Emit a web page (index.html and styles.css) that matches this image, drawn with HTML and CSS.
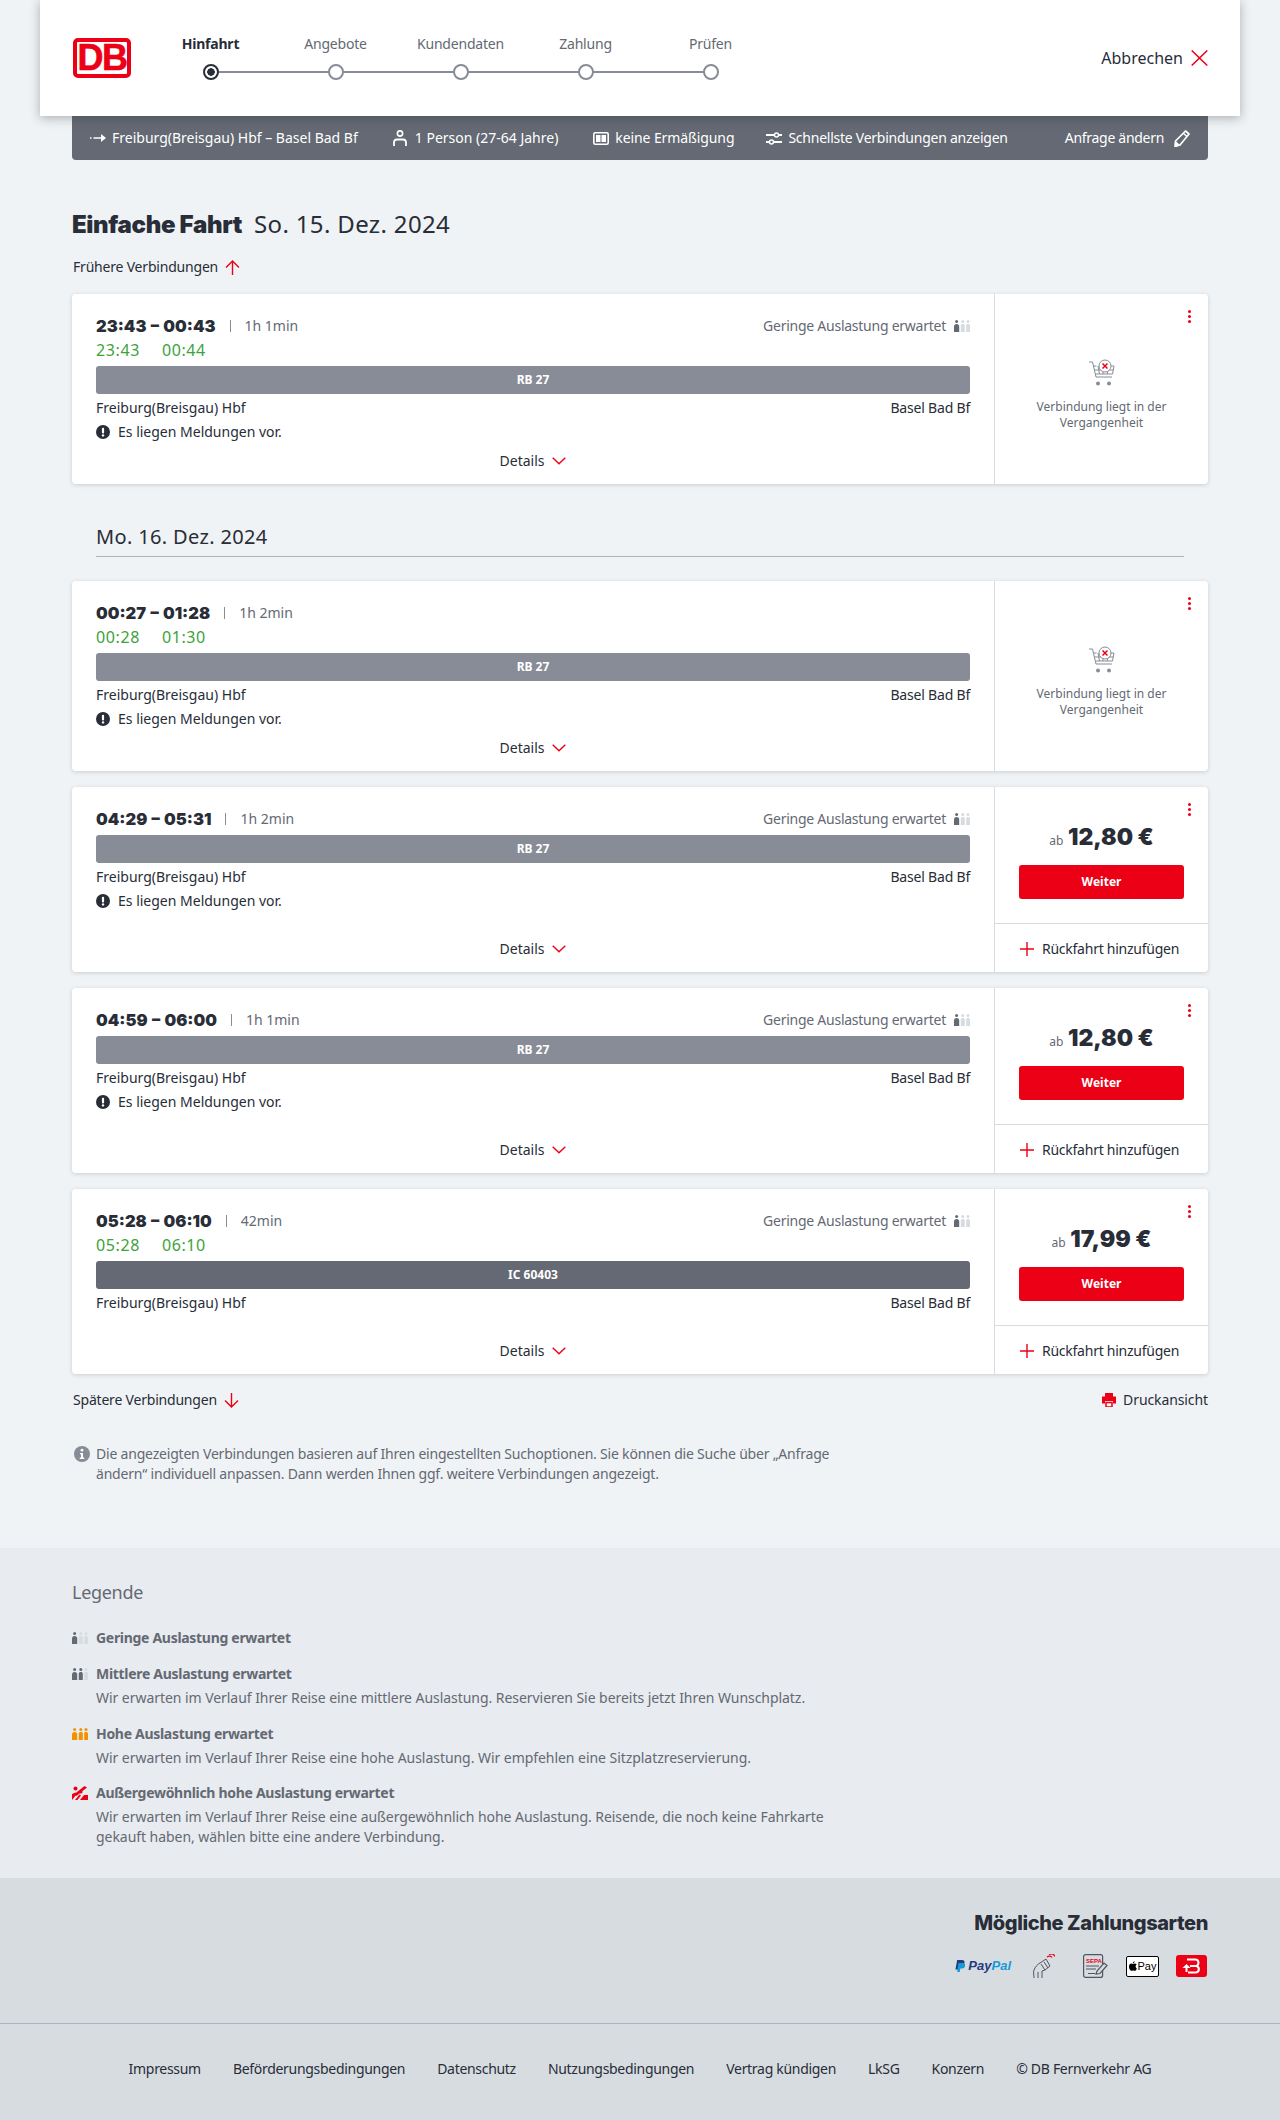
FILE: index.html
```html
<!DOCTYPE html>
<html lang="de">
<head>
<meta charset="utf-8">
<title>Angebote</title>
<link rel="stylesheet" href="styles.css">
</head>
<body>
<svg class="defs" width="0" height="0" aria-hidden="true">
  <symbol id="occ" viewBox="0 0 16 12">
    <circle cx="2.600" cy="1.500" r="1.500" fill="#646973"/><path d="M0 12V6.500C0 5 1 4 2.600 4S5.200 5 5.200 6.500V12z" fill="#646973"/>
    <circle cx="8.800" cy="1.500" r="1.500" fill="#d7dce1"/><path d="M6.800 12V5.500C6.800 4.600 7.600 4 8.800 4s2 .6 2 1.500V12z" fill="#d7dce1"/>
    <circle cx="14" cy="1.500" r="1.500" fill="#d7dce1"/><path d="M12.200 12V5.500C12.200 4.600 13 4 14 4s2 .6 2 1.500V12z" fill="#d7dce1"/>
  </symbol>
  <symbol id="occ2" viewBox="0 0 16 12">
    <circle cx="2.600" cy="1.500" r="1.500" fill="#646973"/><path d="M0 12V6.500C0 5 1 4 2.600 4S5.200 5 5.200 6.500V12z" fill="#646973"/>
    <circle cx="8.800" cy="1.500" r="1.500" fill="#646973"/><path d="M6.800 12V5.500C6.800 4.600 7.600 4 8.800 4s2 .6 2 1.500V12z" fill="#646973"/>
    <circle cx="14" cy="1.500" r="1.500" fill="#d7dce1"/><path d="M12.200 12V5.500C12.200 4.600 13 4 14 4s2 .6 2 1.500V12z" fill="#d7dce1"/>
  </symbol>
  <symbol id="occ3" viewBox="0 0 16 12">
    <circle cx="2.600" cy="1.500" r="1.500" fill="#f39200"/><path d="M0 12V6.500C0 5 1 4 2.600 4S5.200 5 5.200 6.500V12z" fill="#f39200"/>
    <circle cx="8.800" cy="1.500" r="1.500" fill="#f39200"/><path d="M6.800 12V5.500C6.800 4.600 7.600 4 8.800 4s2 .6 2 1.500V12z" fill="#f39200"/>
    <circle cx="14" cy="1.500" r="1.500" fill="#f39200"/><path d="M12.200 12V5.500C12.200 4.600 13 4 14 4s2 .6 2 1.500V12z" fill="#f39200"/>
  </symbol>
  <symbol id="occ4" viewBox="0 0 16 14">
    <path d="M0 14V8l3.500-1.500L5 8l-5 6zM8 14l4-5 4 0v5zM3 14l4.500-5.500L9 9.500 5.500 14zM12.500 0 15 1.500 4.500 10 2.500 8z" fill="#ec0016"/>
    <circle cx="3.500" cy="2.500" r="2" fill="#ec0016"/><circle cx="9" cy="6" r="1.500" fill="#ec0016"/>
  </symbol>
  <symbol id="alert" viewBox="0 0 14 14">
    <circle cx="7" cy="7" r="7" fill="#282d37"/><rect x="5.900" y="2.800" width="2.200" height="5.600" rx="1" fill="#fff"/><circle cx="7" cy="10.400" r="1.200" fill="#fff"/>
  </symbol>
  <symbol id="chev" viewBox="0 0 14 8">
    <path d="M.7.700 7 6.800 13.300.700" fill="none" stroke="#ec0016" stroke-width="1.400"/>
  </symbol>
  <symbol id="plus" viewBox="0 0 14 14">
    <path d="M7 0v14M0 7h14" stroke="#ec0016" stroke-width="1.400" fill="none"/>
  </symbol>
  <symbol id="cart" viewBox="0 0 26 27">
    <g fill="none" stroke="#878c96" stroke-width="1">
      <path d="M0 3h3.500l3.500 15h16M4.500 7h3M5.500 11h19M6.500 15h17l1.500-8h-4"/>
      <path d="M9 7l1.500 8M14 11v4M19 11l-.7 4"/>
      <circle cx="16" cy="7" r="6" fill="#fff"/>
    </g>
    <circle cx="9" cy="24.500" r="2" fill="#878c96"/><circle cx="20" cy="24.500" r="2" fill="#878c96"/>
    <path d="M13.500 4.500l5 5M18.500 4.500l-5 5" stroke="#ec0016" stroke-width="1.500" fill="none"/>
  </symbol>
</svg>

<header class="site-header">
  <div class="logo">DB</div>
  <ol class="steps">
    <li class="step step-active"><span class="step-label">Hinfahrt</span><span class="step-dot"></span></li>
    <li class="step"><span class="step-label">Angebote</span><span class="step-dot"></span></li>
    <li class="step"><span class="step-label">Kundendaten</span><span class="step-dot"></span></li>
    <li class="step"><span class="step-label">Zahlung</span><span class="step-dot"></span></li>
    <li class="step"><span class="step-label">Prüfen</span><span class="step-dot"></span></li>
  </ol>
  <a class="cancel">Abbrechen
    <svg class="cancel-x" viewBox="0 0 17 16"><path d="M.7.500 16.300 15.500M16.300.500.700 15.500" stroke="#ec0016" stroke-width="1.500" fill="none"/></svg>
  </a>
</header>

<div class="summary">
  <span class="sum-item sum-route">
    <svg class="ico-arrow" viewBox="0 0 16 10"><path d="M0 5h1.500M3.500 5H12" stroke="#fff" stroke-width="1.500"/><path d="M11 1l5 4-5 4z" fill="#fff"/></svg>
    Freiburg(Breisgau) Hbf – Basel Bad Bf</span>
  <span class="sum-item sum-person">
    <svg class="ico-person" viewBox="0 0 14 16"><circle cx="7" cy="3.500" r="2.600" fill="none" stroke="#fff" stroke-width="1.600"/><path d="M1 16v-3.500C1 10.500 2.500 9.500 4 9.500h6c1.500 0 3 1 3 3V16" fill="none" stroke="#fff" stroke-width="1.800"/></svg>
    1 Person (27-64 Jahre)</span>
  <span class="sum-item sum-card">
    <svg class="ico-card" viewBox="0 0 16 13"><rect x=".8" y=".8" width="14.400" height="11.400" rx="1.500" fill="none" stroke="#fff" stroke-width="1.600"/><rect x="3" y="3" width="4.500" height="7" fill="#fff"/><rect x="8.500" y="3" width="4.500" height="7" fill="#fff"/></svg>
    keine Ermäßigung</span>
  <span class="sum-item sum-filter">
    <svg class="ico-filter" viewBox="0 0 16 13"><path d="M0 3h8M13 3h3M0 10h3M8 10h8" stroke="#fff" stroke-width="1.800" fill="none"/><circle cx="10.500" cy="3" r="2" fill="#646973" stroke="#fff" stroke-width="1.500"/><circle cx="5.500" cy="10" r="2" fill="#646973" stroke="#fff" stroke-width="1.500"/></svg>
    Schnellste Verbindungen anzeigen</span>
  <span class="sum-item sum-edit">Anfrage ändern
    <svg class="ico-pen" viewBox="0 0 16 17"><path d="M11.500 1 15 4 6 15l-5 1.500L1.500 11z" fill="none" stroke="#fff" stroke-width="1.700" stroke-linejoin="round"/><path d="M1.500 11 6 15l-5 1.500z" fill="#fff"/><path d="M9.500 3.500 13 6.500" stroke="#fff" stroke-width="1.500"/></svg>
  </span>
</div>

<main class="main">
  <h1 class="page-title"><strong>Einfache Fahrt</strong><span class="page-date">So. 15. Dez. 2024</span></h1>
  <a class="more more-up">Frühere Verbindungen
    <svg class="ico-updown" viewBox="0 0 15 15"><path d="M7.500 15V1M1 7.500 7.500 1 14 7.500" stroke="#ec0016" stroke-width="1.400" fill="none"/></svg>
  </a>

  <article class="card">
    <div class="conn">
      <div class="conn-head">
        <span class="time">23:43 – 00:43</span><span class="sep"></span><span class="dur">1h 1min</span>
        <span class="load">Geringe Auslastung erwartet<svg class="occ"><use href="#occ"/></svg></span>
      </div>
      <div class="rt"><span>23:43</span><span>00:44</span></div>
      <div class="train">RB 27</div>
      <div class="stations"><span>Freiburg(Breisgau) Hbf</span><span>Basel Bad Bf</span></div>
      <div class="notice"><svg class="ico-alert"><use href="#alert"/></svg>Es liegen Meldungen vor.</div>
      <div class="details">Details<svg class="ico-chev"><use href="#chev"/></svg></div>
    </div>
    <aside class="side side-past">
      <span class="dots"></span>
      <svg class="ico-cart"><use href="#cart"/></svg>
      <p class="past-text">Verbindung liegt in der Vergangenheit</p>
    </aside>
  </article>

  <h2 class="day">Mo. 16. Dez. 2024</h2>

  <article class="card">
    <div class="conn">
      <div class="conn-head">
        <span class="time">00:27 – 01:28</span><span class="sep"></span><span class="dur">1h 2min</span>
      </div>
      <div class="rt"><span>00:28</span><span>01:30</span></div>
      <div class="train">RB 27</div>
      <div class="stations"><span>Freiburg(Breisgau) Hbf</span><span>Basel Bad Bf</span></div>
      <div class="notice"><svg class="ico-alert"><use href="#alert"/></svg>Es liegen Meldungen vor.</div>
      <div class="details">Details<svg class="ico-chev"><use href="#chev"/></svg></div>
    </div>
    <aside class="side side-past">
      <span class="dots"></span>
      <svg class="ico-cart"><use href="#cart"/></svg>
      <p class="past-text">Verbindung liegt in der Vergangenheit</p>
    </aside>
  </article>

  <article class="card">
    <div class="conn">
      <div class="conn-head">
        <span class="time">04:29 – 05:31</span><span class="sep"></span><span class="dur">1h 2min</span>
        <span class="load">Geringe Auslastung erwartet<svg class="occ"><use href="#occ"/></svg></span>
      </div>
      <div class="train">RB 27</div>
      <div class="stations"><span>Freiburg(Breisgau) Hbf</span><span>Basel Bad Bf</span></div>
      <div class="notice"><svg class="ico-alert"><use href="#alert"/></svg>Es liegen Meldungen vor.</div>
      <div class="details">Details<svg class="ico-chev"><use href="#chev"/></svg></div>
    </div>
    <aside class="side">
      <span class="dots"></span>
      <div class="offer">
        <div class="price"><small>ab</small> 12,80 €</div>
        <a class="btn">Weiter</a>
      </div>
      <div class="return"><svg class="ico-plus"><use href="#plus"/></svg>Rückfahrt hinzufügen</div>
    </aside>
  </article>

  <article class="card">
    <div class="conn">
      <div class="conn-head">
        <span class="time">04:59 – 06:00</span><span class="sep"></span><span class="dur">1h 1min</span>
        <span class="load">Geringe Auslastung erwartet<svg class="occ"><use href="#occ"/></svg></span>
      </div>
      <div class="train">RB 27</div>
      <div class="stations"><span>Freiburg(Breisgau) Hbf</span><span>Basel Bad Bf</span></div>
      <div class="notice"><svg class="ico-alert"><use href="#alert"/></svg>Es liegen Meldungen vor.</div>
      <div class="details">Details<svg class="ico-chev"><use href="#chev"/></svg></div>
    </div>
    <aside class="side">
      <span class="dots"></span>
      <div class="offer">
        <div class="price"><small>ab</small> 12,80 €</div>
        <a class="btn">Weiter</a>
      </div>
      <div class="return"><svg class="ico-plus"><use href="#plus"/></svg>Rückfahrt hinzufügen</div>
    </aside>
  </article>

  <article class="card">
    <div class="conn">
      <div class="conn-head">
        <span class="time">05:28 – 06:10</span><span class="sep"></span><span class="dur">42min</span>
        <span class="load">Geringe Auslastung erwartet<svg class="occ"><use href="#occ"/></svg></span>
      </div>
      <div class="rt"><span>05:28</span><span>06:10</span></div>
      <div class="train train-ic">IC 60403</div>
      <div class="stations"><span>Freiburg(Breisgau) Hbf</span><span>Basel Bad Bf</span></div>
      <div class="details">Details<svg class="ico-chev"><use href="#chev"/></svg></div>
    </div>
    <aside class="side">
      <span class="dots"></span>
      <div class="offer">
        <div class="price"><small>ab</small> 17,99 €</div>
        <a class="btn">Weiter</a>
      </div>
      <div class="return"><svg class="ico-plus"><use href="#plus"/></svg>Rückfahrt hinzufügen</div>
    </aside>
  </article>

  <div class="after-list">
    <a class="more">Spätere Verbindungen
      <svg class="ico-updown" viewBox="0 0 15 15"><path d="M7.500 0v14M1 7.500 7.500 14 14 7.500" stroke="#ec0016" stroke-width="1.400" fill="none"/></svg>
    </a>
    <a class="print">
      <svg class="ico-print" viewBox="0 0 14 14"><path d="M3 0h8v3.500H3zM0 3.500h14v7h-3V8H3v2.500H0z" fill="#ec0016"/><path d="M4 9.500h6V14H4z" fill="none" stroke="#ec0016" stroke-width="1.500"/></svg>
      Druckansicht</a>
  </div>

  <div class="info">
    <svg class="ico-info" viewBox="0 0 16 16"><circle cx="8" cy="8" r="8" fill="#878c96"/><circle cx="8" cy="4.200" r="1.400" fill="#fff"/><path d="M6 7h3v4.500h1.300V13H5.700v-1.500H7V8.300H6z" fill="#fff"/></svg>
    <p>Die angezeigten Verbindungen basieren auf Ihren eingestellten Suchoptionen. Sie können die Suche über „Anfrage ändern“ individuell anpassen. Dann werden Ihnen ggf. weitere Verbindungen angezeigt.</p>
  </div>
</main>

<section class="legend">
  <h3 class="legend-title">Legende</h3>
  <dl class="legend-list">
    <div class="legend-item">
      <dt><svg class="occ"><use href="#occ"/></svg>Geringe Auslastung erwartet</dt>
    </div>
    <div class="legend-item">
      <dt><svg class="occ"><use href="#occ2"/></svg>Mittlere Auslastung erwartet</dt>
      <dd>Wir erwarten im Verlauf Ihrer Reise eine mittlere Auslastung. Reservieren Sie bereits jetzt Ihren Wunschplatz.</dd>
    </div>
    <div class="legend-item">
      <dt><svg class="occ"><use href="#occ3"/></svg>Hohe Auslastung erwartet</dt>
      <dd>Wir erwarten im Verlauf Ihrer Reise eine hohe Auslastung. Wir empfehlen eine Sitzplatzreservierung.</dd>
    </div>
    <div class="legend-item legend-last">
      <dt><svg class="occ occ-tall"><use href="#occ4"/></svg>Außergewöhnlich hohe Auslastung erwartet</dt>
      <dd>Wir erwarten im Verlauf Ihrer Reise eine außergewöhnlich hohe Auslastung. Reisende, die noch keine Fahrkarte gekauft haben, wählen bitte eine andere Verbindung.</dd>
    </div>
  </dl>
</section>

<section class="payment">
  <h3 class="pay-title">Mögliche Zahlungsarten</h3>
  <div class="pay-icons">
    <span class="pay-paypal">
      <svg class="pp-mark" viewBox="0 0 12 14"><path d="M2.500 0H8c2.500 0 3.500 1.500 3 3.500-.6 2.600-2.500 3.500-4.500 3.500H4.800L4 11H.5z" fill="#253b80"/><path d="M4 3.500h5.500c2 .2 2.700 1.500 2.200 3.300-.6 2.400-2.400 3.200-4.200 3.200H6.200L5.500 14H2.500z" fill="#179bd7"/></svg>
      <span class="pp-text"><b class="pp-a">Pay</b><b class="pp-b">Pal</b></span>
    </span>
    <svg class="pay-contactless" viewBox="0 0 22 24"><g fill="none" stroke="#50555f" stroke-width="1"><path d="M1 24c0-3-1-5 0-8 1-3 4-6 6-7l6-4 4 7-5 4-3 1v7M5 24v-6"/><path d="M8 10l4 6M11 8l4 6"/></g><path d="M14 3c2-1.500 4-1 5 .5M16 .5c2.500-1 5 0 6 2" fill="none" stroke="#ec0016" stroke-width="1.200"/></svg>
    <svg class="pay-sepa" viewBox="0 0 25 24"><rect x=".6" y=".6" width="19" height="22.800" rx="2" fill="none" stroke="#50555f" stroke-width="1.200"/><text x="3" y="9" class="sepa-text">SEPA</text><path d="M3 12h13M3 15h10M5 19.500h7" stroke="#50555f" stroke-width="1"/><path d="M13 20l1-3 7-8 3 2.500-7 8z" fill="#d7dce1" stroke="#50555f" stroke-width="1.200"/></svg>
    <span class="pay-apple"><svg class="apple-mark" viewBox="0 0 10 12"><path d="M7 0c.1 1-.8 2.500-2.200 2.500C4.700 1.200 5.800.1 7 0zM8.300 6.300c0-1.200.7-1.900 1.300-2.300-.6-.9-1.500-1.200-2.300-1.200-1 0-1.800.6-2.300.6s-1.300-.6-2.200-.6C1.500 2.800 0 4.200 0 6.800 0 9 1.600 12 2.900 12c.7 0 1.200-.5 2.200-.5s1.400.5 2.200.5c1.100 0 2.100-1.700 2.500-3-1-.4-1.500-1.400-1.500-2.700z" fill="#000"/></svg>Pay</span>
    <svg class="pay-bb" viewBox="0 0 31 22"><rect width="31" height="22" rx="3" fill="#ec0016"/><path d="M11 4.500h8.500c3.500 0 4 5 1 6.500 3.500 1 3 6.500-1 6.500H12M14 11h6.500" fill="none" stroke="#fff" stroke-width="2"/><path d="M6.500 13l4-4 4 4zM9.500 12.500h2V17h-2z" fill="#fff"/></svg>
  </div>
</section>

<footer class="footer">
  <a>Impressum</a><a>Beförderungsbedingungen</a><a>Datenschutz</a><a>Nutzungsbedingungen</a><a>Vertrag kündigen</a><a>LkSG</a><a>Konzern</a><span>© DB Fernverkehr AG</span>
</footer>
</body>
</html>
```

FILE: styles.css
```css
* { box-sizing: border-box; }
html, body { margin: 0; padding: 0; }
body {
  background: #f0f3f5;
  color: #282d37;
  font-family: "Noto Sans", "Liberation Sans", sans-serif;
  font-size: 14px;
  line-height: 20px;
}
.defs { position: absolute; }
h1, h2, h3, p, dl, dd, ol { margin: 0; padding: 0; }
a { color: inherit; text-decoration: none; }

/* header */
.site-header {
  position: relative;
  z-index: 2;
  height: 116px;
  margin: 0 40px;
  background: #fff;
  box-shadow: 0 2px 10px rgba(40, 45, 55, .35);
  display: flex;
  align-items: center;
  padding: 0 32px 0 33px;
}
.logo {
  width: 58px;
  height: 40px;
  border: 4px solid #ec0016;
  border-radius: 5px;
  color: #ec0016;
  font-family: "Liberation Sans", sans-serif;
  font-weight: 700;
  font-size: 36px;
  line-height: 32px;
  letter-spacing: -1.5px;
  -webkit-text-stroke: .6px #ec0016;
  text-align: center;
  overflow: hidden;
}
.steps {
  list-style: none;
  display: flex;
  margin-left: 17px;
  align-self: flex-start;
  padding-top: 34px;
}
.step {
  position: relative;
  width: 125px;
  display: flex;
  flex-direction: column;
  align-items: center;
  color: #646973;
  letter-spacing: -.2px;
}
.step-label { height: 20px; line-height: 20px; margin-bottom: 10px; }
.step-active .step-label { color: #282d37; font-weight: 700; }
.step-dot {
  position: relative;
  z-index: 1;
  width: 16px;
  height: 16px;
  border-radius: 50%;
  border: 2px solid #878c96;
  background: #fff;
}
.step-active .step-dot {
  border-color: #282d37;
  background: radial-gradient(circle, #282d37 0 3.5px, #fff 4px);
}
.step:not(:last-child)::after {
  content: "";
  position: absolute;
  left: 50%;
  top: 37px;
  width: 125px;
  height: 2px;
  background: #878c96;
}
.cancel {
  margin-left: auto;
  display: flex;
  align-items: center;
  gap: 8px;
  font-size: 16px;
}
.cancel-x { width: 17px; height: 16px; }

/* summary bar */
.summary {
  position: relative;
  z-index: 1;
  height: 44px;
  margin: 0 72px;
  background: #646973;
  border-radius: 0 0 4px 4px;
  color: #fff;
  display: flex;
  align-items: center;
  padding: 0 18px;
}
.sum-item { display: flex; align-items: center; gap: 6px; white-space: nowrap; }
.sum-person { margin-left: 35px; gap: 8px; }
.sum-card { margin-left: 35px; letter-spacing: -.1px; }
.sum-filter { margin-left: 32px; letter-spacing: -.25px; }
.sum-edit { margin-left: auto; gap: 10px; letter-spacing: -.3px; }
.ico-arrow { width: 16px; height: 10px; }
.ico-person { width: 14px; height: 16px; }
.ico-card { width: 16px; height: 13px; }
.ico-filter { width: 16px; height: 13px; }
.ico-pen { width: 16px; height: 17px; }

/* main */
.main { padding: 48px 72px 64px; }
.page-title {
  display: flex;
  align-items: baseline;
  gap: 12px;
  height: 32px;
  font-size: 24px;
  line-height: 32px;
  font-weight: 400;
}
.page-title strong { font-family: "Inter", sans-serif; font-weight: 900; letter-spacing: -.35px; }
.page-date { letter-spacing: .35px; }
.more {
  display: inline-flex;
  align-items: center;
  gap: 7px;
  margin-left: 1px;
  letter-spacing: -.2px;
}
.more-up { margin-top: 17px; margin-bottom: 17px; display: flex; }
.ico-updown { width: 15px; height: 15px; }

.card {
  display: flex;
  background: #fff;
  border-radius: 4px;
  box-shadow: 0 1px 4px rgba(40, 45, 55, .18);
  margin-bottom: 16px;
  min-height: 185px;
}
.conn {
  flex: 1;
  min-width: 0;
  padding: 22px 24px 13px;
  display: flex;
  flex-direction: column;
}
.conn-head { display: flex; align-items: center; height: 20px; }
.time {
  font-family: "Inter", sans-serif;
  font-weight: 900;
  font-size: 16.5px;
  word-spacing: 1px;
}
.sep {
  width: 1px;
  height: 12px;
  background: #878c96;
  margin: 0 14px;
}
.dur { color: #646973; }
.load {
  margin-left: auto;
  display: flex;
  align-items: center;
  gap: 8px;
  color: #646973;
  letter-spacing: -.25px;
}
.occ { width: 16px; height: 12px; flex: none; }
.occ-tall { height: 14px; }
.rt {
  display: flex;
  gap: 22px;
  margin-top: 4px;
  font-size: 16px;
  letter-spacing: .6px;
  color: #3da33a;
  height: 20px;
  line-height: 20px;
}
.train {
  margin-top: 6px;
  height: 28px;
  border-radius: 3px;
  background: #878c96;
  color: #fff;
  font-size: 12px;
  font-weight: 700;
  line-height: 28px;
  text-align: center;
}
.train-ic { background: #646973; }
.stations {
  display: flex;
  justify-content: space-between;
  margin-top: 4px;
}
.stations span:last-child { letter-spacing: -.2px; }
.notice {
  display: flex;
  align-items: center;
  gap: 8px;
  margin-top: 4px;
}
.ico-alert { width: 14px; height: 14px; flex: none; }
.details {
  margin-top: auto;
  padding-top: 9px;
  display: flex;
  justify-content: center;
  align-items: center;
  gap: 8px;
}
.ico-chev { width: 14px; height: 8px; }

.side {
  position: relative;
  flex: none;
  width: 214px;
  border-left: 1px solid #d7dce1;
  display: flex;
  flex-direction: column;
}
.dots {
  position: absolute;
  top: 16px;
  right: 17px;
  width: 3px;
  height: 3px;
  border-radius: 50%;
  background: #ec0016;
  box-shadow: 0 5px 0 #ec0016, 0 10px 0 #ec0016;
}
.side-past { align-items: center; padding-top: 65px; }
.ico-cart { width: 26px; height: 27px; }
.past-text {
  margin-top: 13px;
  width: 150px;
  font-size: 12px;
  line-height: 16px;
  color: #646973;
  text-align: center;
}
.offer {
  flex: 1;
  padding: 36px 24px 0;
  text-align: center;
}
.price {
  height: 28px;
  font-family: "Inter", sans-serif;
  font-weight: 900;
  font-size: 23px;
  line-height: 28px;
}
.price small {
  font-family: "Noto Sans", sans-serif;
  font-weight: 400;
  font-size: 12px;
  color: #646973;
}
.btn {
  display: block;
  margin-top: 14px;
  height: 34px;
  background: #ec0016;
  border-radius: 3px;
  color: #fff;
  font-size: 12px;
  font-weight: 700;
  line-height: 34px;
}
.return {
  height: 49px;
  border-top: 1px solid #d7dce1;
  display: flex;
  align-items: center;
  padding: 2px 0 0 25px;
  gap: 8px;
  white-space: nowrap;
  letter-spacing: -.25px;
}
.ico-plus { width: 14px; height: 14px; }

.day {
  margin: 37px 24px 24px;
  border-bottom: 1px solid #afb4bb;
  font-weight: 400;
  font-size: 20px;
  letter-spacing: .35px;
  line-height: 32px;
  height: 36px;
}
.after-list {
  display: flex;
  justify-content: space-between;
  align-items: center;
  height: 20px;
  margin-top: 2px;
}
.print { display: flex; align-items: center; gap: 7px; letter-spacing: -.1px; }
.ico-print { width: 14px; height: 14px; }
.info {
  display: flex;
  gap: 6px;
  width: 762px;
  margin: 34px 0 0 2px;
  color: #646973;
  letter-spacing: -.2px;
}
.ico-info { width: 16px; height: 16px; flex: none; margin-top: 2px; }

/* legend */
.legend {
  background: #e8ebef;
  padding: 30px 72px 31px;
  color: #646973;
}
.legend-title {
  font-weight: 400;
  font-size: 18px;
  letter-spacing: -.3px;
  line-height: 28px;
}
.legend-list { margin-top: 22px; }
.legend-item { margin-bottom: 16px; width: 770px; }
.legend-last { margin-bottom: 0; margin-top: -1px; }
.legend-item dt {
  display: flex;
  align-items: center;
  gap: 8px;
  font-weight: 700;
  letter-spacing: -.3px;
}
.legend-item dd { margin: 4px 0 0 24px; letter-spacing: -.05px; }

/* payment */
.payment {
  background: #d7dce1;
  height: 145px;
  padding: 31px 72px 0;
}
.pay-title {
  text-align: right;
  font-family: "Inter", sans-serif;
  font-weight: 800;
  font-size: 20px;
  letter-spacing: -.4px;
  line-height: 28px;
}
.pay-icons {
  display: flex;
  justify-content: flex-end;
  align-items: center;
  margin-top: 17px;
  padding-right: 1px;
}
.pay-paypal { display: flex; align-items: center; gap: 3px; width: 56px; }
.pp-mark { width: 12px; height: 14px; }
.pp-text { font-family: "Liberation Sans", sans-serif; font-style: italic; font-size: 13px; line-height: 14px; }
.pp-a { color: #253b80; }
.pp-b { color: #179bd7; }
.pay-contactless { width: 22px; height: 24px; margin-left: 22px; }
.pay-sepa { width: 25px; height: 24px; margin-left: 28px; }
.sepa-text { font-family: "Liberation Sans", sans-serif; font-size: 6px; font-weight: 700; fill: #ec0016; }
.pay-apple {
  display: flex;
  align-items: center;
  justify-content: center;
  gap: 1px;
  width: 33px;
  height: 21px;
  margin-left: 18px;
  background: #fff;
  border: 1px solid #000;
  border-radius: 2px;
  color: #000;
  font-family: "Liberation Sans", sans-serif;
  font-size: 11px;
}
.apple-mark { width: 8px; height: 10px; }
.pay-bb { width: 31px; height: 22px; margin-left: 17px; }

/* footer */
.footer {
  background: #d7dce1;
  border-top: 1px solid #afb4bb;
  height: 97px;
  padding-bottom: 6px;
  display: flex;
  justify-content: center;
  align-items: center;
  gap: 32px;
  letter-spacing: -.3px;
}
```
